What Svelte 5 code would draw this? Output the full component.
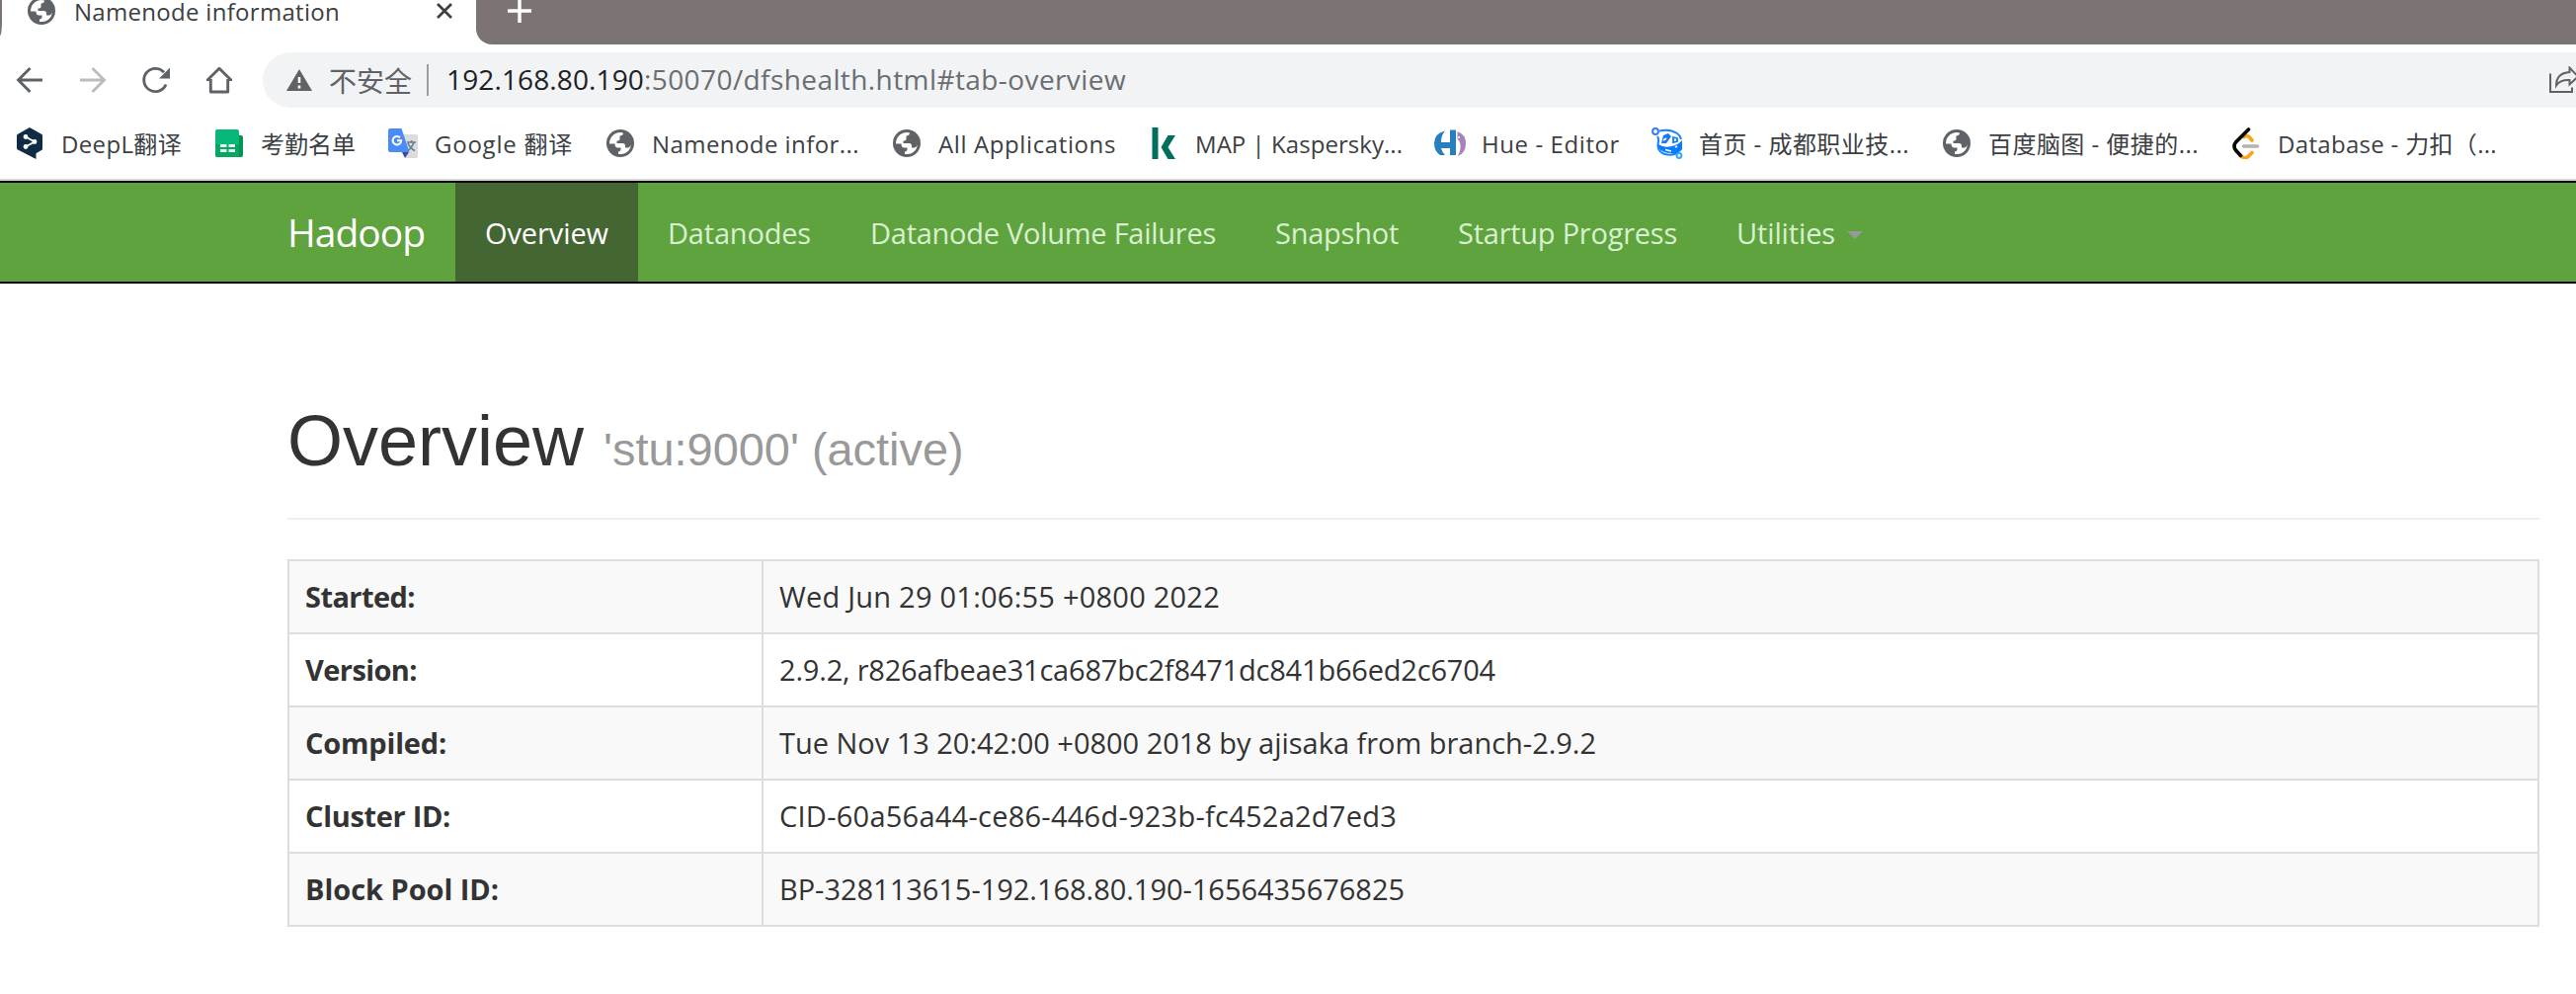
<script>
  // Tunes letter-spacing so a label takes up the given advance width.
  function fit(node, width) {
    node.style.letterSpacing = '0px';
    const natural = node.getBoundingClientRect().width;
    node.style.letterSpacing = (width - natural) / [...node.textContent].length + 'px';
  }

  const bookmarks = [
    { icon: 'deepl', label: 'DeepL翻译', width: 122 },
    { icon: 'sheet', label: '考勤名单', width: 96 },
    { icon: 'translate', label: 'Google 翻译', width: 140 },
    { icon: 'globe', label: 'Namenode infor...', width: 210 },
    { icon: 'globe', label: 'All Applications', width: 180 },
    { icon: 'kaspersky', label: 'MAP | Kaspersky...', width: 210 },
    { icon: 'hue', label: 'Hue - Editor', width: 140 },
    { icon: 'college', label: '首页 - 成都职业技...', width: 213 },
    { icon: 'globe', label: '百度脑图 - 便捷的...', width: 213 },
    { icon: 'leetcode', label: 'Database - 力扣（...', width: 222 }
  ];

  const links = [
    { label: 'Overview', width: 125, active: true },
    { label: 'Datanodes', width: 145 },
    { label: 'Datanode Volume Failures', width: 350 },
    { label: 'Snapshot', width: 125 },
    { label: 'Startup Progress', width: 222 },
    { label: 'Utilities', width: 100, caret: true }
  ];

  const rows = [
    { name: 'Started:', nameWidth: 111, value: 'Wed Jun 29 01:06:55 +0800 2022', width: 446 },
    { name: 'Version:', nameWidth: 113, value: '2.9.2, r826afbeae31ca687bc2f8471dc841b66ed2c6704', width: 725 },
    { name: 'Compiled:', nameWidth: 143, value: 'Tue Nov 13 20:42:00 +0800 2018 by ajisaka from branch-2.9.2', width: 827 },
    { name: 'Cluster ID:', nameWidth: 147, value: 'CID-60a56a44-ce86-446d-923b-fc452a2d7ed3', width: 625 },
    { name: 'Block Pool ID:', nameWidth: 196, value: 'BP-328113615-192.168.80.190-1656435676825', width: 633 }
  ];
</script>

{#snippet icon(name)}
  <svg class="icon" viewBox="0 0 32 32" aria-hidden="true">
    {#if name === 'globe'}
      <circle cx="16" cy="16" r="14" fill="#5f6368" />
      <path fill="#fff" d="M5 16.500C5 10 9.500 5.300 16 5L19 5.500C19 7.500 17.500 8.300 15.500 8.500V11.500C15.500 13 14.500 13.500 12.500 13.500V16H18.500C20 16 21 17 21 18.500V20.500H23.500C25 20.500 26 19.500 26.800 17.500C26.500 22.500 22.500 26.800 16.500 27H14V24.500C15.500 24.500 16.500 23.500 16.500 22V20.500H13.500C11.500 20.500 10.500 19 10.500 16.500Z" />
    {:else if name === 'deepl'}
      <path fill="#0f2b46" d="M16 0L28 6.800C28.700 7.200 29 7.700 29 8.500V21.500C29 22.300 28.700 22.700 28 23.100L22.500 26.300V32L4 22.600C3.300 22.200 3 21.700 3 21V8.500C3 7.700 3.300 7.200 4 6.800Z" />
      <path d="M12 9.500L21 14.500L12 19.500" fill="none" stroke="#fff" stroke-width="1.800" />
      <circle cx="12" cy="9.500" r="2.400" fill="#fff" /><circle cx="21" cy="14.500" r="2.400" fill="#fff" /><circle cx="12" cy="19.500" r="2.400" fill="#fff" />
    {:else if name === 'sheet'}
      <rect x="8" y="8" width="22" height="22" rx="2" fill="#079451" />
      <path d="M4 2H24Q26 2 26 4V30H4Q2 30 2 28V4Q2 2 4 2Z" fill="#07b879" />
      <path d="M2 17H26V30H4Q2 30 2 28Z" fill="#08a662" />
      <path d="M7 17h6.500v3H7zm8.500 0H22v3h-6.500zM7 22h6.500v3H7zm8.500 0H22v3h-6.500z" fill="#e1fff3" />
    {:else if name === 'translate'}
      <path d="M13 7H29.500Q31 7 31 8.500V29.500Q31 31 29.500 31H19Z" fill="#dcdcdc" />
      <path d="M20 15h9M24.500 13v2M27 15q-2 6-7 9M21 16q2 5 7 7.500" fill="none" stroke="#607d8b" stroke-width="1.500" />
      <path d="M15 25H22L18 31Z" fill="#3949ab" />
      <path d="M3 1H14.500L22.500 25H3Q1 25 1 23V3Q1 1 3 1Z" fill="#4c8bf5" />
      <path d="M13 10.200A4.300 4.300 0 1 0 14.200 13.300H10" fill="none" stroke="#fff" stroke-width="2" />
    {:else if name === 'kaspersky'}
      <path d="M4.500 0H10.500V32H4.500ZM20.500 8H28L20.500 20L28 32H20.500L13.500 20Z" fill="#00705c" />
    {:else if name === 'hue'}
      <path d="M0 16Q0 6 11 3.500Q7 8 7 15H16V2.500H22V28H16V21H7Q8 25 11 28H6Q0 24 0 16Z" fill="#287fbd" />
      <path d="M23.500 4Q32 7 32 16Q32 26 24 29Q27 23 26.500 18Q26 13 23.500 12Z" fill="#a783bd" />
      <path d="M24 9l2 2m0-2l-2 2" stroke="#fff" stroke-width=".8" />
    {:else if name === 'college'}
      <circle cx="4" cy="4" r="2.900" fill="none" stroke="#3c78ff" stroke-width="2" />
      <circle cx="28" cy="28.500" r="2.400" fill="none" stroke="#3ba5ff" stroke-width="2" />
      <path d="M8 3.500Q18 1 26 6Q29 8 30 12M6 9Q8 12 6.500 17Q6 23 11 26Q17 29 25 26.500" fill="none" stroke="#1683ff" stroke-width="2" />
      <path d="M7 17Q13 21 20 19Q27 18 31 13V22Q28 27 21 26Q10 26 7 20Z" fill="#087bff" />
      <path d="M12 8L17 6L20 9L15 16H10Z" fill="#1678ff" />
      <path d="M12 13l3-2M14 22.500l6 1.500M24 20l2-1" stroke="#fff" stroke-width="1.800" />
      <path d="M22 10l4 1v3l-4 1z" fill="none" stroke="#1678ff" stroke-width="1.800" />
    {:else if name === 'leetcode'}
      <g fill="none" stroke-width="3.600" stroke-linecap="round">
        <path d="M14 9.500Q17 7.500 19 9.500L22 13" stroke="#ffa116" />
        <path d="M10.500 28.500Q15 33 19 28.500L22 25.500" stroke="#ffa116" />
        <path d="M13.500 19H27.500" stroke="#b3b3b3" />
        <path d="M18.500 2L5.500 15Q2.500 19 5.500 23L10.500 28.500" stroke="#070706" />
      </g>
    {/if}
  </svg>
{/snippet}

<div class="window">
  <div class="tabstrip">
    <div class="previous"></div>
    <div class="tab">
      {@render icon('globe')}
      <span class="title"><span class="fit" use:fit={269}>Namenode information</span></span>
      <svg class="close" viewBox="0 0 16 16"><path d="M1 1L15 15M15 1L1 15" fill="none" stroke="#3c4043" stroke-width="2.800" /></svg>
    </div>
    <div class="empty">
      <svg class="plus" viewBox="0 0 24 24"><path d="M12 0V24M0 12H24" stroke="#fff" stroke-width="3.500" /></svg>
    </div>
  </div>

  <div class="toolbar">
    <div class="controls">
      <svg class="icon" viewBox="0 0 32 32"><path d="M29 16H5M16.500 4L4.500 16L16.500 28" fill="none" stroke="#5f6368" stroke-width="2.900" /></svg>
      <svg class="icon" viewBox="0 0 32 32"><path d="M3 16H27M15.500 4L27.500 16L15.500 28" fill="none" stroke="#babcbe" stroke-width="2.900" /></svg>
      <svg class="icon" viewBox="0 0 32 32"><path d="M26 20.500A11.600 11.600 0 1 1 24 8.300" fill="none" stroke="#5f6368" stroke-width="2.900" /><path d="M30 3.500V14.500H19Z" fill="#5f6368" /></svg>
      <svg class="icon" viewBox="0 0 32 32"><path d="M7.300 15V28H24.700V15M3.800 16.300L16 4.200L28.200 16.300" fill="none" stroke="#5f6368" stroke-width="2.900" stroke-linejoin="round" /><path d="M3 16H8M24 16H29" stroke="#5f6368" stroke-width="2.200" /></svg>
    </div>
    <div class="address">
      <svg class="warning" viewBox="0 0 26 22"><path d="M13 0L26 22H0Z" fill="#5f6368" /><path d="M13 8V14M13 16.500V19.500" stroke="#fff" stroke-width="2.600" /></svg>
      <span class="security">不安全</span>
      <span class="divider"></span>
      <span class="url"><span class="fit host" use:fit={200}>192.168.80.190</span><span class="fit" use:fit={488}>:50070/dfshealth.html#tab-overview</span></span>
      <svg class="share" viewBox="0 0 32 28"><path d="M1 7.500V26H23V21.500" fill="none" stroke="#5f6368" stroke-width="2" /><path d="M7 19.500Q7 7 20.500 6V1.500L29 10.500L20.500 18.500V14Q11 13.500 7 19.500Z" fill="none" stroke="#5f6368" stroke-width="2" /></svg>
    </div>
  </div>

  <div class="bookmarks">
    {#each bookmarks as item}
      <div class="bookmark">
        {@render icon(item.icon)}
        <span class="fit" use:fit={item.width}>{item.label}</span>
      </div>
    {/each}
  </div>

  <nav class="navbar">
    <div class="brand"><span class="fit" use:fit={139}>Hadoop</span></div>
    {#each links as link}
      <div class="link" class:active={link.active}>
        <span class="fit" use:fit={link.width}>{link.label}</span>
        {#if link.caret}<span class="caret"></span>{/if}
      </div>
    {/each}
  </nav>

  <main>
    <h1>Overview <small>'stu:9000' (active)</small></h1>
    <table>
      <tbody>
        {#each rows as row}
          <tr>
            <th><span class="fit" use:fit={row.nameWidth}>{row.name}</span></th>
            <td><span class="fit" use:fit={row.width}>{row.value}</span></td>
          </tr>
        {/each}
      </tbody>
    </table>
  </main>
</div>

<style>
  :global(body) { background: #fff; overflow: hidden; }
  .window {
    width: 2608px; height: 1006px; overflow: hidden; box-sizing: border-box; background: #fff;
    font-family: "Open Sans", "Noto Sans CJK SC", sans-serif; color: #333;
  }
  .fit { display: inline-block; white-space: nowrap; vertical-align: top; }
  svg { display: block; flex: none; }
  .icon { width: 32px; height: 32px; }

  .tabstrip { display: flex; height: 45px; overflow: hidden; }
  .previous { width: 2px; height: 36px; background: #7b7473; border-bottom-right-radius: 2px 14px; }
  .tab { display: flex; align-items: center; width: 480px; height: 22px; padding-left: 24px; box-sizing: border-box; }
  .title { width: 342px; margin: 1px 0 0 17px; font-size: 24px; line-height: 22px; color: #3c4043; }
  .close { width: 16px; height: 16px; margin-left: 25px; }
  .empty { flex: 1; background: #7b7473; border-bottom-left-radius: 16px; padding-left: 32px; }
  .plus { width: 24px; height: 24px; margin-top: -1px; }

  .toolbar { display: flex; padding-top: 8px; height: 56px; }
  .controls { display: flex; align-items: center; gap: 32px; width: 252px; padding-left: 14px; }
  .address { display: flex; align-items: center; flex: 1; background: #f1f3f4; border-radius: 28px 0 0 28px; padding-left: 24px; font-size: 28px; color: #5f6368; }
  .warning { width: 26px; height: 22px; }
  .security { margin-left: 17px; width: 84px; font-size: 28px; white-space: nowrap; line-height: 40px; font-family: "Noto Sans CJK SC", sans-serif; }
  .divider { width: 2px; height: 32px; background: #9aa0a6; margin-left: 15px; }
  .url { display: flex; margin: -3px 0 0 18px; white-space: nowrap; color: #6a6e72; line-height: 40px; }
  .host { color: #202124; }
  .share { width: 32px; height: 28px; margin: 0 -5px 0 auto; }

  .bookmarks { display: flex; gap: 32px; height: 72px; align-items: center; padding-left: 14px; border-bottom: 2px solid #d8d8d8; overflow: hidden; }
  .bookmark { display: flex; gap: 16px; align-items: center; font-size: 24px; line-height: 34px; color: #3c4043; }
  .bookmark .fit { margin-top: 2px; }

  .navbar { display: flex; height: 100px; border-top: 2px solid #080808; border-bottom: 2px solid #080808; background: #5fa33e; padding-left: 291px; color: #d9f0d0; }
  .brand { width: 170px; font-size: 39px; line-height: 99px; color: #fff; }
  .link { display: flex; align-items: center; padding: 0 30px; font-size: 29px; line-height: 40px; }
  .link .fit { margin-top: 1px; }
  .active { background: #446633; color: #fff; }
  .caret { border: 8px solid transparent; border-top-color: #999; border-bottom: 0; margin: 6px 0 0 12px; }

  main { width: 2280px; margin-left: 291px; }
  h1 { box-sizing: border-box; height: 145px; margin: 94px 0 40px; border-bottom: 2px solid #eee; font: 500 72px/79px "Liberation Sans", sans-serif; padding-top: 26px; }
  small { font-size: 46.900px; font-weight: 400; color: #999; }
  table { width: 2280px; border-collapse: collapse; table-layout: fixed; font-size: 29px; line-height: 40px; }
  th, td { height: 40px; padding: 16px; border: 2px solid #ddd; text-align: left; vertical-align: top; }
  th { width: 446px; font-weight: 700; }
  tr:nth-child(odd) { background: #f9f9f9; }
</style>
